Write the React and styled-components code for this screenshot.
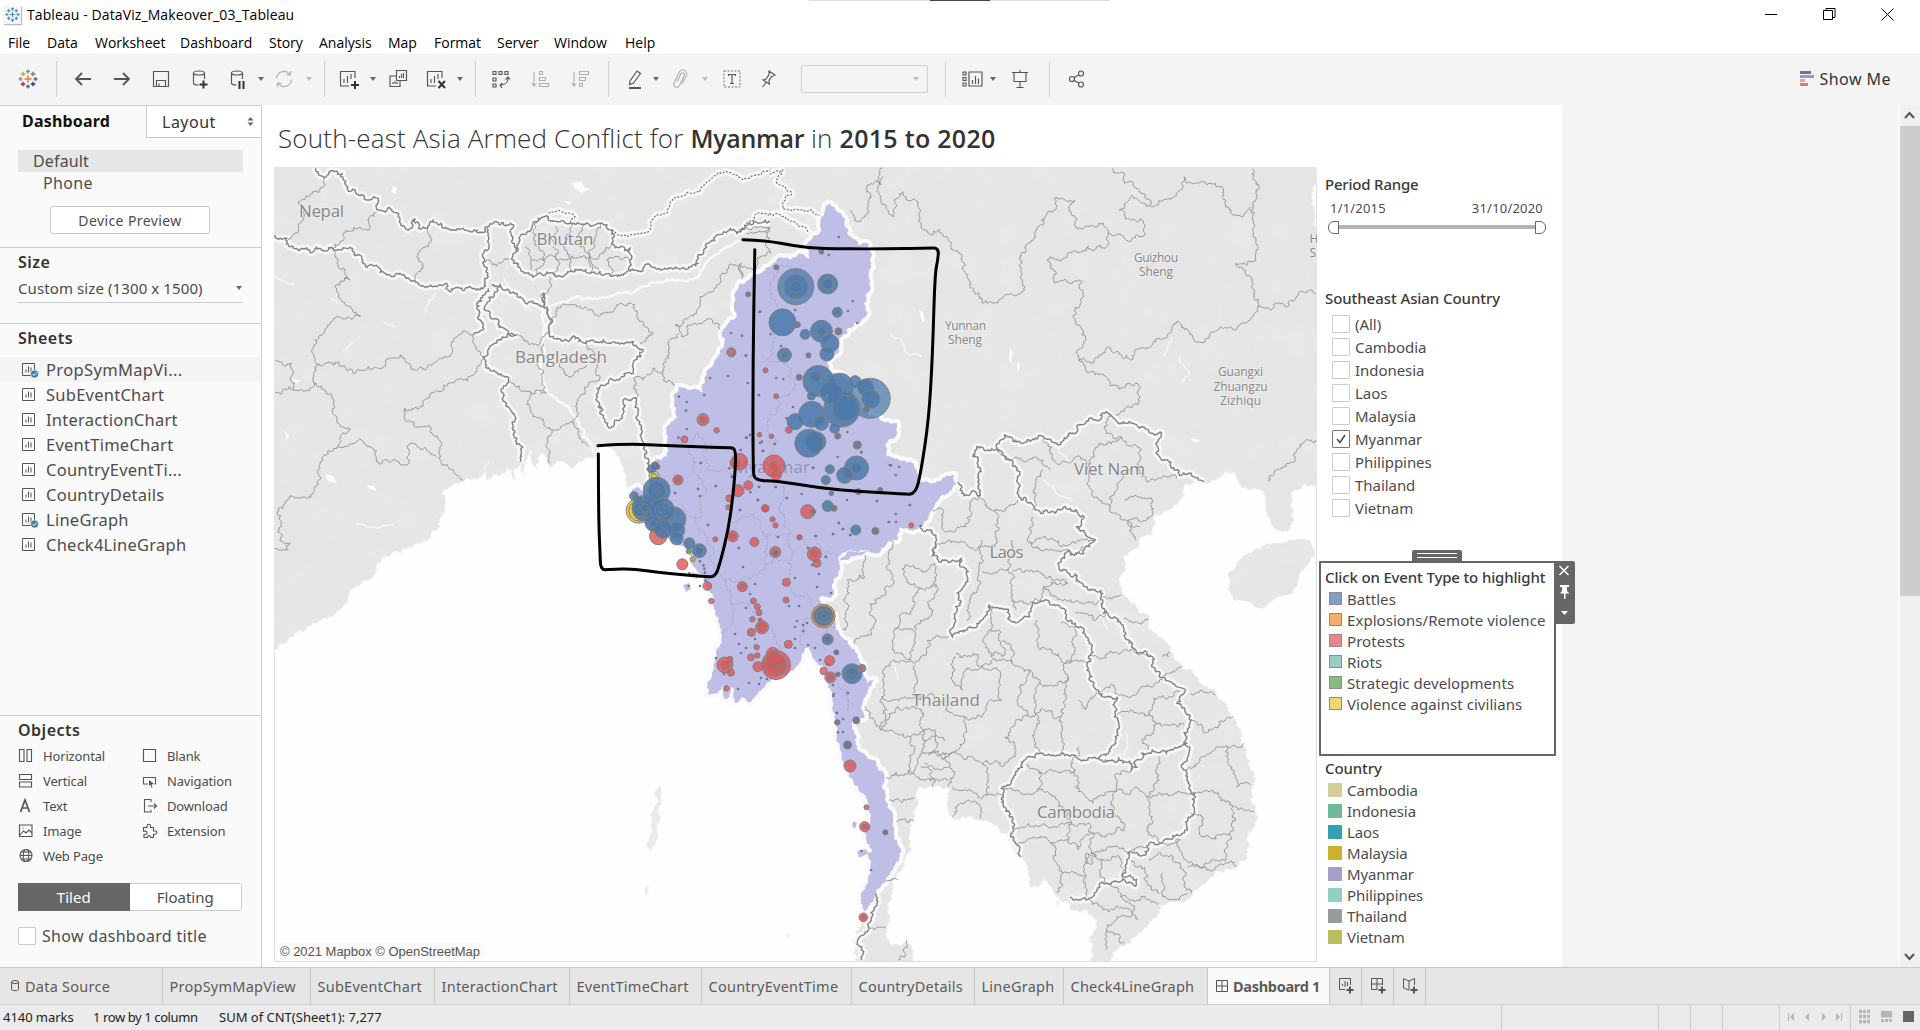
import React from "react";
import styled, { createGlobalStyle } from "styled-components";

const Global = createGlobalStyle`
  * { box-sizing: border-box; }
  body { margin: 0; background: #fff; overflow: hidden; }
`;

const ui = `"Open Sans", "Noto Sans", sans-serif`;
const book = `"Noto Sans", "Open Sans", sans-serif`;

/* ---------- shell ---------- */
const Window = styled.div`
  width: 1920px; height: 1030px; display: flex; flex-direction: column;
  background: #fff; color: #4c4c4c; font-family: ${book}; overflow: hidden; white-space: nowrap;
`;
const Txt = styled.span`
  font-size: ${p => p.$size || 15}px; font-weight: ${p => p.$w || 400};
  letter-spacing: ${p => p.$ls || 0}px; color: ${p => p.$c || "inherit"};
`;
const TitleBar = styled.header`
  height: 29px; display: flex; align-items: center; padding-left: 3px; gap: 6px; color: #000;
  font-family: ${ui}; position: relative;
`;
const TopNotch = styled.div`
  position: absolute; left: 809px; top: 0; width: 301px; height: 1px; background: #ddd;
  display: flex; justify-content: center;
  &::after { content: ""; width: 60px; height: 1px; background: #444; }
`;
const AppBadge = styled.span`
  width: 18px; height: 18px; display: grid; place-items: center; background: #f3f6f9;
  box-shadow: 1px 1px 1px #b9b9b9;
`;
const WinButtons = styled.div`
  margin-left: auto; display: flex; gap: 45px; padding-right: 26px; padding-bottom: 1px;
  svg { width: 13px; height: 14px; display: block; }
`;
const MenuBar = styled.nav`
  height: 25px; display: flex; align-items: center; padding: 2px 0 0 8px; color: #000; font-family: ${ui};
`;
const MenuItem = styled.span`
  width: ${p => p.$w}px; font-size: 14px; letter-spacing: 0;
`;
const ToolBar = styled.div`
  height: 51px; flex: none; display: flex; align-items: center; background: #f4f4f4; border-top: 1px solid #eee; padding-bottom: 2px;
`;
const Tool = styled.span`
  width: 20px; height: 20px; flex: none; margin-left: ${p => p.$ml}px; opacity: ${p => (p.$off ? 0.42 : 1)};
  svg { display: block; width: 20px; height: 20px; fill: none; stroke: #555; stroke-width: 1.15; overflow: visible; }
`;
const Sep = styled.span`width: 1px; height: 36px; background: #d0d0d0; margin-left: ${p => p.$ml}px;`;
const Caret = styled.span`
  width: 0; height: 0; flex: none; margin-left: ${p => (p.$ml || 0) + 1}px; margin-right: 1px;
  border: 3px solid transparent; border-top: 4px solid ${p => (p.$off ? "#bbb" : "#666")}; border-bottom: 0;
`;
const FitBox = styled.div`
  width: 127px; height: 28px; margin-left: 22px; border: 1px solid #d0d0d0; border-radius: 2px;
  display: flex; align-items: center; justify-content: flex-end; padding-right: 7px;
`;
const ShowMe = styled.div`
  margin-left: auto; margin-right: 29px; display: flex; gap: 6px; align-items: center; color: #333;
`;
const Body = styled.main`display: flex; height: 862px; flex: none;`;

/* ---------- side pane ---------- */
const Side = styled.aside`
  width: 262px; flex: none; background: #fafafa; border-right: 1px solid #ccc; border-top: 1px solid #ccc;
  display: flex; flex-direction: column;
`;
const PaneTabs = styled.div`height: 32px; display: flex;`;
const PaneTab = styled.div`
  width: ${p => (p.$on ? 146 : 115)}px; display: flex; align-items: center; padding-left: ${p => (p.$on ? 22 : 15)}px;
  color: #111; padding-bottom: ${p => (p.$on ? 3 : 0)}px;
  ${p => !p.$on && "border-left: 1px solid #ccc; border-bottom: 1px solid #ccc; background: #fff; padding-right: 7px; justify-content: space-between; color: #333;"}
`;
const DeviceBox = styled.div`height: 110px; padding: 12px 18px 0; border-bottom: 1px solid #ccc;`;
const Device = styled.div`
  height: 22px; display: flex; align-items: center; padding-left: ${p => (p.$on ? 15 : 25)}px;
  background: ${p => (p.$on ? "#e6e6e6" : "transparent")};
`;
const PreviewButton = styled.div`
  width: 160px; height: 28px; margin: 12px 0 0 32px; border: 1px solid #ccc; border-radius: 2px; background: #fff;
  display: flex; align-items: center; justify-content: center;
`;
const SizeBox = styled.div`height: 76px; border-bottom: 1px solid #ccc; padding: 1px 18px 0;`;
const SizeSelect = styled.div`
  height: 30px; display: flex; align-items: center; justify-content: space-between; border-bottom: 1px solid #ccc; padding-top: 1px;
`;
const Heading = styled.div`
  height: 24px; display: flex; align-items: center; font-size: 16px; font-weight: 600; letter-spacing: 0.5px; color: #333; padding-top: 2px;
  ${p => p.$pad && "padding-left: 18px;"}
`;
const SheetsBox = styled.div`height: 392px; padding-top: 1px; border-bottom: 1px solid #ccc;`;
const SheetList = styled.div`margin-top: 8px;`;
const Sheet = styled.div`
  height: 25px; display: flex; align-items: center; padding-left: 22px; gap: 8px; background: ${p => (p.$on ? "#f4f4f4" : "transparent")};
  svg { width: 16px; height: 17px; overflow: visible; }
`;
const ObjectsBox = styled.div`padding: 1px 18px 0;`;
const ObjectGrid = styled.div`
  display: grid; grid-template-columns: 124px 110px; grid-auto-rows: 25px; grid-auto-flow: row; margin-top: 2px;
`;
const ObjectItem = styled.div`
  display: flex; align-items: center; gap: 9px;
  svg { width: 16px; height: 16px; fill: none; stroke: #555; stroke-width: 1.1; overflow: visible; }
`;
const Segment = styled.div`display: flex; width: 224px; height: 28px; margin-top: 15px; border: 1px solid #ccc; border-radius: 2px;`;
const SegmentItem = styled.div`
  flex: 1; display: flex; align-items: center; justify-content: center;
  ${p => (p.$on ? "background: #666; color: #fff; margin: -1px 0 -1px -1px;" : "background: #fff;")}
`;
const CheckRow = styled.label`display: flex; align-items: center; gap: ${p => p.$gap}px; height: ${p => p.$h}px;`;
const Box = styled.span`
  width: 18px; height: 18px; border: 1px solid ${p => (p.$on ? "#777" : "#ccc")}; background: #fff; border-radius: 1px; display: grid; place-items: center;
  svg { width: 12px; height: 12px; fill: none; stroke: #444; stroke-width: 1.4; }
`;

/* ---------- canvas ---------- */
const Canvas = styled.section`width: 1300px; background: #fff; display: flex; flex-direction: column; flex: none;`;
const DashTitle = styled.h1`
  height: 62px; margin: 0; padding: 5px 0 0 16px; white-space: pre; color: #333;
  font: 300 26px/56px ${ui}; letter-spacing: 0.18px;
`;
const Strong = styled.b`font-size: 25px; font-weight: 600; letter-spacing: ${p => p.$ls}px;`;
const DashRow = styled.div`display: flex; padding-left: 12px;`;
const MapFrame = styled.div`
  width: 1043px; height: 795px; border: 1px solid #ddd; flex: none; background: #fefefe;
  svg { display: block; margin: -1px; width: 1043px; height: 794px; }
`;
const Filters = styled.div`width: 239px; padding-left: 2px; display: flex; flex-direction: column;`;
const Label = styled.div`
  height: 22px; display: flex; align-items: center; font-size: 15px; font-weight: 500; letter-spacing: ${p => p.$ls || -0.05}px; color: #3a3a3a;
`;
const Period = styled.div`height: 114px; padding: 6px 0 0 6px;`;
const Dates = styled.div`display: flex; justify-content: space-between; width: 213px; margin: 3px 0 0 5px; height: 19px; align-items: center;`;
const Slider = styled.div`
  display: flex; align-items: center; width: 218px; height: 12px; margin: 4px 0 0 3px;
  &::before, &::after { content: ""; width: 9px; height: 11px; border: 1px solid #666; background: #fff; border-radius: 6px 0 0 6px; }
  &::after { border-radius: 0 6px 6px 0; }
`;
const Track = styled.div`flex: 1; height: 4px; background: #b4b4b4;`;
const CountryFilter = styled.div`height: 269px; padding: 6px 0 0 6px;`;
const Options = styled.div`padding: 3px 0 0 7px;`;
const Grip = styled.div`
  width: 50px; height: 11px; margin-left: 93px; background: #666; border-radius: 2px 2px 0 0; display: flex; flex-direction: column; gap: 3px; padding: 3px 5px;
  &::before, &::after { content: ""; height: 1px; background: #fff; }
`;
const Legend = styled.div`
  position: relative; width: 237px; height: 195px; border: 2px solid #666; border-radius: 1px; padding: 3px 0 0 4px; flex: none;
`;
const LegendTools = styled.div`
  position: absolute; left: 233px; top: -2px; width: 21px; height: 63px; background: #666; border-radius: 0 2px 2px 0;
  svg { width: 22px; height: 63px; display: block; }
`;
const LegendRow = styled.div`height: 21px; display: flex; align-items: center; gap: 5px; padding-left: ${p => p.$pl}px;`;
const Swatch = styled.span`
  width: ${p => (p.$edge ? 13 : 14)}px; height: ${p => (p.$edge ? 13 : 14)}px; background: ${p => p.$c};
  ${p => p.$edge && "border: 1px solid #8c8c8c;"}
`;
const Countries = styled.div`padding: 1px 0 0 6px;`;
const Gutter = styled.div`flex: 1; background: #f4f4f4;`;
const ScrollBar = styled.div`
  width: 21px; background: #f0f0f0; display: flex; flex-direction: column; border-left: 1px solid #fff;
  svg { width: 19px; height: 21px; fill: none; stroke: #555; stroke-width: 2; }
`;
const Thumb = styled.div`height: 470px; background: #cdcdcd; margin-bottom: auto;`;

/* ---------- bottom ---------- */
const SheetTabs = styled.div`height: 38px; flex: none; background: #e6e6e6; border-top: 1px solid #c8c8c8; border-bottom: 1px solid #ccc; display: flex; color: #5a5a5a;`;
const Tab = styled.div`
  width: ${p => p.$w}px; border-right: 1px solid #c8c8c8; display: flex; align-items: center; gap: 5px;
  padding-left: ${p => p.$pl || 6.5}px; background: ${p => (p.$on ? "#fafafa" : "transparent")};
  svg { fill: none; stroke: #555; stroke-width: 1; overflow: visible; }
`;
const Status = styled.footer`height: 25px; background: #ebebeb; display: flex; align-items: center; color: #222; padding-left: 3px;`;
const StatusText = styled.span`width: ${p => p.$w}px; font-size: 13px; letter-spacing: ${p => p.$ls || 0}px; padding-bottom: 1px;`;
const StatusCell = styled.span`
  width: ${p => p.$w}px; height: 25px; border-left: 1px solid #ccc; display: flex; align-items: center;
  svg { width: 68px; height: 20px; margin-bottom: 1px; }
`;

/* ---------- map geometry ---------- */
const frames = {
  A: [270, 160, 1 / 3, 1 / 3],
  B: [740, 160, 1 / 2.7034, 1 / 3],
  C: [560, 420, 1 / 3, 1 / 3],
  D: [770, 540, 1 / 2.851, 1 / 3],
  P: [0, 0, 1, 1],
};
const pts = (f, s) => {
  const [ox, oy, sx, sy] = frames[f];
  const n = s.trim().split(/\s+/).map(Number);
  const out = [];
  for (let i = 0; i < n.length; i += 2) out.push([ox + n[i] * sx, oy + n[i + 1] * sy]);
  return out;
};
const noise = (a, b, c, d) => {
  const v = Math.sin(a * 12.9898 + b * 78.233 + c * 37.719 + d * 9.131) * 43758.5453;
  return (v - Math.floor(v)) * 2 - 1;
};
const wiggle = (p, q, amp, out) => {
  const dx = q[0] - p[0], dy = q[1] - p[1], len = Math.hypot(dx, dy);
  if (len < 2.6) { out.push(q); return; }
  const k = noise(p[0], p[1], q[0], q[1]) * amp * (len < 10 ? 1.8 : 0.9);
  const m = [(p[0] + q[0]) / 2 - dy * k, (p[1] + q[1]) / 2 + dx * k];
  wiggle(p, m, amp, out); wiggle(m, q, amp, out);
};
const rough = (ps, amp = 0.22, close = false) => {
  const src = close ? [...ps, ps[0]] : ps;
  const out = [src[0]];
  for (let i = 1; i < src.length; i++) wiggle(src[i - 1], src[i], amp, out);
  return "M" + out.map(p => p[0].toFixed(1) + " " + p[1].toFixed(1)).join("L") + (close ? "Z" : "");
};
const smooth = ps => {
  let d = `M${ps[0][0]} ${ps[0][1]}`;
  for (let i = 1; i < ps.length - 1; i++) {
    d += `Q${ps[i][0]} ${ps[i][1]} ${(ps[i][0] + ps[i + 1][0]) / 2} ${(ps[i][1] + ps[i + 1][1]) / 2}`;
  }
  return d + `L${ps.at(-1)[0]} ${ps.at(-1)[1]}`;
};
const lines = (f, list, amp) => list.split(";").map(s => s.trim()).filter(Boolean).map(s => rough(pts(f, s), amp)).join("");

const westCoast = [
  ...pts("D", "268 1120 258 1060 272 1045 287 1000 278 940 292 935 270 880 285 820 265 760 225 700 205 640 190 560 180 470 165 430 162 385 135 370 110 320 95 325"),
  ...pts("C", "735 682 715 735 690 755 620 790 570 850 545 830 525 848 515 800 500 838 490 795 470 820 440 825 450 780 470 710 485 660 475 600 460 530 440 510 430 470 400 440 385 390 350 370 300 350 240 300 215 250 215 210"),
];
const landPts = [
  ...pts("P", "270 160 1320 160 1320 487"),
  ...pts("B", "1540 978 1500 990 1490 1030 1500 1080 1480 1115 1450 1110 1425 1070 1420 1020 1415 990 1370 985 1340 945 1310 935 1290 955 1255 965 1200 980 1200 1010 1160 1050 1120 1070 1115 1110 1080 1150 1050 1180 1040 1200"),
  ...pts("D", "1011 80 995 120 1010 165 1050 210 1080 240 1080 270 1140 335 1190 390 1270 450 1320 530 1345 600 1370 690 1370 780 1385 810 1375 870 1360 940 1330 980 1250 1020 1190 1080 1110 1090 1110 1120 1050 1180 1010 1220 975 1240 965 1290 910 1290 910 1190 935 1140 900 1110 820 1070 780 1010 765 1040 740 1040 735 990 700 930 690 890 655 870 600 840 520 835 510 770 510 745 455 738 420 750 412 830 400 900 385 960 350 1040 335 1100 332 1180 350 1215 395 1210 410 1290 235 1290 245 1190 260 1150"),
  ...westCoast,
  ...pts("A", "1120 980 1090 1000 1065 960 1045 890 1000 850 975 890 900 920 870 905 840 930 820 880 800 930 780 870 765 945 750 905 730 960 715 910 700 940 650 960 655 900 640 945 560 970 515 1000 525 1050 500 1110 440 1150 340 1190"),
  ...pts("P", "372 578 340 610 306 630 288 640 270 656"),
];
const myanmarPts = [
  ...pts("B", "240 130 265 155 285 180 300 230 320 255 345 250 350 330 352 390 335 430 345 460 310 490 275 530 268 570 240 600 245 640 300 660 350 765 400 785 425 790 420 830 400 840 395 890 470 910 482 965 520 970 580 945 585 970 540 1010 520 1050 490 1100 430 1105 425 1140 370 1180 290 1175 270 1200"),
  ...pts("C", "930 393 860 392 835 410 830 470 820 490 815 530 780 530 790 560 825 590 830 630 890 700 910 740 920 790 945 780 925 810 910 840 910 895"),
  ...pts("D", "235 545 240 600 290 660 325 700 330 770 350 850 375 935 350 990 330 1025 300 1060 285 1090"),
  ...westCoast,
  ...pts("A", "1105 980 1128 1000 1140 940 1150 905 1195 890 1190 800 1220 770 1225 680 1300 695 1310 640 1350 580 1365 540 1355 520 1400 470 1410 370 1500 320"),
  ...pts("B", "100 298 160 280 195 305 180 260 215 220 220 170"),
];
const land = rough(landPts, 0.18, true);
const myanmar = rough(myanmarPts, 0.14, true);
const hainan = rough(pts("D", "1310 95 1380 30 1450 8 1540 0 1552 50 1510 100 1490 160 1400 205 1320 180 1305 150"), 0.12, true);

const nations =
  lines("A", `137 25 160 50 190 33 218 40 228 75 265 105 300 120 325 115 325 150 380 158 390 180 420 205 435 178 450 208 472 205 480 185 540 210 600 215 645 208 700 188 722 190 727 240 740 275;
  15 225 50 235 65 258 120 278 140 260 190 268 240 262 280 310 330 325 360 345 390 340 430 362 490 380 530 370 540 395 600 380 640 385 655 350 638 290 650 205;
  740 275 750 240 780 215 800 185 835 170 900 190 990 190 1025 210 1025 250 1080 265 1078 330 1020 345 960 340 900 335 860 350 800 345 760 335 725 295 740 275;
  1080 335 1140 315 1200 325 1265 320 1310 250 1400 220 1500 185;
  655 385 620 430 640 495 612 520; 690 370 650 430 660 470 740 525 685 540 640 590 650 625 715 660 700 700 735 780 750 905;
  665 375 700 390 740 400 790 430 820 440 820 400 835 450 835 520 900 540 1000 540 1090 545 1120 570 1095 600 1090 635 1040 660 990 680 985 740 1005 785 1030 800 1060 760 1065 715 1100 720 1115 800 1130 880 1137 940`) +
  lines("B", `590 965 600 1000 650 1005 645 940 630 890 640 860 695 865 715 825 765 850 820 830 860 855 900 820 960 780 990 755 1020 785 1080 805 1140 820 1125 880 1180 930 1255 965;
  695 865 730 900 750 950 760 1020 800 1050 880 1040 930 1070 910 1100 960 1140 930 1180; 485 1100 520 1120 530 1160 518 1190`) +
  lines("D", `895 40 840 40 825 90 900 140 945 170 945 200 1000 250 1090 350 1110 410 1180 460 1160 490 1200 540 1190 620 1180 690 1200 760 1190 870 1110 910 1080 915;
  465 30 480 60 545 55 545 150 530 200 520 290 570 260 625 195 690 245 740 230 760 190 830 205 870 250 910 310 905 380 935 450 990 470 985 600 940 650;
  940 650 860 645 780 645 730 655 700 700 660 745 665 800 695 850 700 910 715 950; 940 650 1030 690 1060 640 1090 630 1130 640 1190 610;
  1080 915 1070 945 1020 940 1005 1000 1045 1035 990 1025 940 1030 920 1070 880 1080 855 1070; 300 1050 305 1090 280 1170 250 1200 260 1260`);

const regions =
  lines("A", `160 50 165 75 115 110 85 125 90 190 55 240; 320 155 290 210 210 250 190 268; 478 190 475 260 440 290 458 310 435 360;
  190 268 205 320 240 360 195 380 215 420 272 468 215 475 135 540 150 615 130 665 100 695 70 690 65 610 15 600; 15 700 70 690;
  150 615 205 605 255 640 340 620 390 585 465 630 535 590 545 545 590 515 612 520;
  612 520 632 580 600 650 520 690 460 730 405 745 405 775 470 800 510 885 550 930 580 960;
  130 665 190 720 205 790 240 805 205 860 310 865 320 905 370 900 410 915 420 850 500 890;
  205 860 160 900 135 980 110 1015 55 1015 25 1045 30 1140 60 1150 55 1170 15 1165; 840 350 835 390 815 420; 640 305 720 298;
  840 490 860 445 920 440 980 465 1050 430 1095 435 1100 470 1150 520 1110 550;
  1415 310 1415 355; 1415 315 1350 350 1290 410 1280 450 1215 495 1235 530 1270 490 1345 490 1350 510; 1225 520 1185 600 1180 660 1215 675;
  1180 635 1155 625 1120 660 1098 650 1100 720; 820 550 820 640 830 700 780 695 720 660; 780 695 845 820 840 910; 845 810 910 790 955 860;
  910 790 930 710 990 650 985 600 955 570 950 540; 740 525 810 550 830 450; 870 610 885 645 910 645 950 615;
  765 260 785 330; 800 185 790 240 820 290 800 345; 860 200 850 260 860 350; 905 190 880 260 900 335; 940 195 930 260 960 340; 990 190 960 270 985 330; 785 300 830 290 880 300 930 290 1000 280 1025 250; 1020 345 1010 300 1078 300; 1430 220 1480 215 1500 200`) +
  lines("B", `385 25 380 75 345 75 345 160 320 185 300 150; 385 50 395 140 415 170 420 130 440 95 465 120 490 190 515 225 540 210 570 260 610 340 620 380 655 430 700 420 760 400 770 380 760 280 800 230 815 180 850 150 850 115 905 120 890 150 910 205 970 190 995 220 985 265 900 275 830 300 850 370 925 365 920 420 900 470 935 540 915 600 990 565 1060 600 1080 565 1140 540 1175 490 1240 545 1300 500 1360 490 1400 440 1385 360 1340 310 1395 300 1395 240 1380 150 1385 25;
  995 220 1085 230 1090 185 1025 150 1060 105 1130 135 1190 90 1200 50 1285 70 1310 130 1360 170 1380 140; 1005 25 1040 45 1040 70 1085 100 1110 135;
  1400 440 1450 430 1480 440 1510 405 1557 400; 915 600 935 635 1000 665 1075 670 1075 735 1015 765; 1557 840 1520 850 1500 900 1450 930 1430 965;
  700 870 760 900 820 900 840 930; 820 830 850 900 920 890 940 930 970 850 1030 830 1085 870 1080 930 1100 965 1180 955; 1000 760 990 820 1030 830;
  940 930 950 1000 1000 1040 1080 1100; 1000 1040 1030 960 1060 930; 820 930 800 1000 790 1050; 750 1020 690 1050 690 1160 640 1170 520 1170;
  650 1005 610 1100 550 1110 550 1050 520 1050; 790 1070 780 1130 850 1170 930 1160; 690 1050 650 1005; 1040 1020 1115 1020 1110 1070 1050 1080 1070 1140; 0 215 40 200 80 205 70 260 85 280 0 320 10 350`) +
  lines("D", `270 45 270 110 220 120 215 170 225 200 220 260 205 270; 345 0 340 60 350 120 330 160 285 190 290 280 240 310; 385 75 390 120 430 145 410 200 370 235 355 270 350 330 400 360 415 280 355 265;
  430 145 475 140 455 230 415 270; 475 140 470 70 385 75; 605 0 600 130 570 190 560 240; 605 95 680 85 690 150 700 210; 680 85 690 0; 690 95 800 110 850 130 780 140 770 180 690 180;
  740 10 850 15 930 0; 780 140 830 180 900 190 940 180; 870 215 930 240 960 210; 915 345 1000 340 1090 350; 935 455 1030 470 1060 440 1120 420; 990 525 1080 520 1110 470 1170 450; 1080 520 1100 550 1180 550; 1100 550 1060 600 1080 630;
  625 200 625 270 650 270 670 340 630 350 625 270; 510 290 450 300 430 350 410 370 345 365 320 400 320 470 415 470 415 375; 320 470 315 570 400 590 395 700 330 715; 530 340 580 340 600 380 690 370 660 300;
  530 350 520 420 550 450 560 385 650 390 660 480 590 530 555 530 555 600 500 640; 690 370 740 390 770 430 850 410 840 370 905 365; 740 390 710 440 735 525 830 530 840 450 850 410; 770 430 765 530 770 640; 830 530 830 640;
  735 525 670 590 700 650 610 675 530 640 440 640; 415 470 470 470 500 510 555 530; 400 590 470 570 460 640 500 640 510 740; 760 240 770 330 840 370; 830 250 870 260 870 330 840 370; 880 480 900 510 930 455;
  610 675 620 765 570 750 520 740; 620 765 660 765; 520 830 530 800 590 790 600 835; 340 780 410 770; 360 845 410 840; 660 745 690 750 780 755 860 850 850 900 800 910 705 910; 765 690 765 755; 730 675 765 690 870 690 870 650;
  695 865 780 850 860 850; 435 520 440 640 395 700 440 720 510 720; 440 600 500 600; 440 670 510 680; 465 740 460 690 430 680; 315 570 340 520 440 520;
  870 690 870 740 920 790 985 755 1080 770 1200 765; 985 755 990 700 1030 695; 985 755 1010 870 920 880 915 940 1000 925 1075 915; 1075 770 1090 830 1075 870 1110 910; 850 850 910 850 920 880 880 930 850 900;
  800 910 810 960 835 1000 900 1005 910 940; 835 1000 820 1060; 900 1005 900 1070; 915 940 950 960 950 1030; 1110 650 1110 720 1080 770; 1200 540 1240 580 1280 545 1320 530; 1190 690 1240 650 1305 620 1350 610;
  1305 620 1330 740 1370 735; 1200 760 1280 770 1320 800 1380 815; 1200 820 1230 830 1230 890 1310 880 1320 800; 1170 900 1180 950 1300 960 1310 880; 1080 960 1170 970 1200 1060; 1120 910 1170 900; 1190 980 1245 990 1330 980;
  1120 1000 1120 1070 1190 1060; 950 1030 1000 1070 1110 1090; 910 1080 950 1110 1050 1140; 990 1130 960 1170 960 1230; 960 1170 1010 1210; 270 500 315 560; 285 1165 330 1160; 330 1025 365 1020; 390 1200 385 1250 365 1260;
  880 620 880 650; 900 940 930 945 920 970 900 970 900 940; 950 960 1000 960 1010 1020; 1030 960 1070 1000 1110 1060; 1000 1070 1040 1110 990 1130; 1200 460 1270 465; 1120 350 1140 335; 1000 165 950 170; 1080 240 1010 235; 1120 410 1175 380`);

const dotted =
  lines("A", `1025 210 1070 230 1140 210 1145 180 1190 160 1210 115 1290 95 1320 60 1360 38 1420 60 1470 45 1500 30; 835 158 870 152 915 170 900 190; 1400 220 1430 190 1480 160 1500 165`, 0.14) +
  lines("B", `80 42 115 30 100 70 140 100 115 145 160 150 215 165; 80 160 120 170 150 190 185 220`, 0.14);
const inner =
  lines("C", `415 40 440 150 500 150 520 170; 415 40 425 280 400 290 440 350 460 430 490 480 580 465 615 450 610 340 580 280 520 310; 490 480 510 550 490 665; 510 550 545 545 580 580 630 620 665 700; 610 335 690 340 690 430 615 430; 690 430 700 520 755 540 770 570; 670 200 660 260 690 340; 630 50 670 200; 690 340 750 400 770 370 830 410; 730 680 730 600 800 600; 800 690 790 640 830 620; 830 800 860 810 860 870; 370 250 400 290`) +
  lines("B", `185 315 105 320 90 400 100 440; 85 480 75 600 130 620 150 680 105 720 80 780 100 850`);
const water =
  lines("A", `840 440 930 410 1080 400 1140 370 1290 345 1370 260 1410 245; 820 440 820 530 830 700 900 750 940 830 980 880`, 0.12);
const streams =
  lines("A", `465 460 475 420 500 400; 15 350 75 375; 220 570 250 545; 260 1090 320 1105 370 1095; 340 485 375 500; 700 350 720 380; 180 415 205 430; 750 430 785 455`, 0.12) +
  lines("B", `405 520 440 550 450 580 490 590; 1190 590 1215 640 1190 665; 1145 590 1165 530; 820 960 900 1020; 850 860 895 910`, 0.12) +
  lines("D", `945 230 965 270; 1020 580 1000 660; 350 370 365 420; 250 570 265 610`, 0.12);
const ponds = "M393 185l4 3-1 6-5-2zM572 183l9-2 4 7 6 0-9 5-7-4zM563 201l9 1-3 3zM325 474l8 2 4 7-8-1zM367 485l7 1 3 5-8-2zM919 310l4 2 2 9-3 1zM1010 348l3 5-2 9-2-2zM1017 362l3 2-1 7-2-1zM1190 438l10 2-5 3zM284 430l5 6-2 4zM292 379l9 1-5 4z";

const BLUE = "#4a79aa", RED = "#e05558", ORANGE = "#f5993d", YELLOW = "#edc948", GREEN = "#59a14f", GREY = "#6f7488", BROWN = "#a9717a";
const marks = [
  ["B", BLUE, 0.72, "352 715 20 151 380 18 151 380 12 151 380 6"],
  ["B", ORANGE, 0.8, "292 935 5"],
  ["B", BLUE, 0.86, "237 372 10 237 372 5 115 487 13.5 220 514 11 243 550 9 235 582 7 176 523 5 120 585 7 263 457 5 212 663 15.5 270 680 13.5 311 665 6 340 682 8 354 717 9 275 747 18 285 745 13 246 698 11 204 650 5 194 763 13 149 785 8 220 790 7 256 805 5 205 845 10 186 850 14 315 924 12 315 924 5 283 946 8 243 928 4.5 232 960 4.5 237 1038 5.5 313 1110 5 220 514 4 120 585 3 263 457 2 193 708 4"],
  ["B", GREY, 0.9, "155 494 3 266 514 3.5 185 586 2.5 160 652 3 342 748 3 264 828 3 317 855 4 220 275 2.5 98 322 2.5 22 403 2.5 254 1045 3 366 1113 3.5 247 1000 2.3 320 995 3 379 990 2.5"],
  ["B", RED, 0.85, "69 631 2.5 98 709 2.5 132 810 3.3 53 824 2.3 85 829 2.3 68 1045 3.5 88 1078 2.6 96 1096 2.6 463 1096 2.5 161 1132 2.6"],
  ["A", RED, 0.75, "1299 779 6 1299 779 3 1340 811 2.7 1243 838 3.5"],
  ["A", BROWN, 0.9, "1384 577 4.5"],
  ["C", RED, 0.8, "642 138 11 649 165 5 642 138 4 538 125 8.3 525 130 5 354 180 5 354 180 2.5 534 212 6 565 196 4.5 508 235 3.5 505 262 2.5 616 265 3.7 743 275 7 518 349 5.5 518 349 3 583 366 4.5 646 396 5.5 763 402 7 763 402 4 771 430 4 466 358 2.5 718 352 2.5 367 433 5.5 295 348 8.7 442 498 4.3 454 543 2.7 547 500 5 547 500 2.5 679 487 4 678 540 3 580 543 3 592 560 3 597 578 3 601 600 2 577 598 2.7 574 637 4 606 622 6.5 606 622 4 590 682 2.7 573 712 3.5 592 706 2.7 685 673 4 638 700 6 594 740 5 648 735 14.5 645 735 11 650 735 8 650 735 4 650 735 2 495 735 8 495 735 4 513 758 3.5 510 718 3 499 805 2.7 809 722 5 791 753 3.7 811 772 5.5"],
  ["C", YELLOW, 0.95, "236 272 12.5 238 272 10.5 282 168 5 282 168 2.5"],
  ["C", ORANGE, 1, "790 588 11.8 398 418 2.5"],
  ["C", GREEN, 0.9, "386 394 2.5"],
  ["C", BLUE, 0.85, "275 146 4 285 138 4 292 140 2.5 222 228 4.3 233 240 4 340 298 12.5 350 330 8 350 355 6.5 388 370 5.5 418 392 7 418 392 4 290 212 13.5 290 212 9 290 212 4 290 212 1.5 255 265 13 255 265 9 241 268 7 244 268 3.5 255 265 4 307 270 12 307 270 7 307 270 3.5 280 310 8 280 310 4 310 328 9 790 588 10 790 588 6 790 588 3 803 658 5.5 803 658 3 876 761 10 876 761 6 876 761 3 834 763 2.3 760 275 2.3"],
  ["C", BROWN, 0.95, "906 745 3.8 811 772 3"],
  ["C", GREY, 0.95, "829 697 2.5 646 398 2.7"],
  ["D", RED, 0.8, "228 678 6 275 802 2.5 270 860 5 270 860 2.3 266 1132 4.3 266 1132 2"],
  ["D", GREY, 0.95, "221 615 4 246 541 3.5 192 547 2.7 329 877 2.5"],
];
const specks = [
  ...pts("A", "1470 455 1383 519 1416 527 1428 587 1374 648 1320 654 1433 669 1303 705 1227 710 1250 726 1248 752 1467 705 1250 807 1225 833 1428 833 1440 825 1470 849 1412 870 1480 873 1293 909 1338 978 1284 987 1290 1008 1215 999 1386 951 1467 981 1464 1020 1410 1050 1314 1095 1407 1164"),
  ...pts("B", "267 231 240 285 305 423 292 453 317 489 149 450 53 456 83 522 16 587 111 558 98 654 117 657 51 705 143 741 126 775 290 816 94 852 61 873 264 891 328 876 197 924 405 915 430 921 421 945 48 1020 127 1014 97 981 289 1020 370 1023 459 1035 421 1062 402 1086 267 1089 278 1107 204 1128 299 1125 488 1098 232 1190 252 1122"),
  ...pts("C", "560 53 606 65 644 72 508 145 422 129 414 207 345 219 516 170 467 198 597 201 571 217 594 240 647 201 540 270 680 234 725 222 951 243 1008 306 1050 255 905 97 760 143 993 136 987 306 849 327 837 309 768 348 819 342 870 345 744 384 798 411 756 435 777 462 771 501 813 519 705 474 717 558 687 558 585 492 570 522 558 564 549 441 536 384 654 351 444 315 420 424 430 436 433 446 435 458 436 470 437 482 386 498 420 498 388 460 525 642 537 672 558 684 543 699 468 714 711 603 705 621 729 615 741 609 729 633 705 657 744 675 765 684 705 684 780 720 801 733 819 795 821 822 864 819 831 879 603 774 597 792 567 789 534 807 492 762 621 777 585 657 597 600"),
  ...pts("D", "190 519 208 537 208 576 194 577 261 933 288 990 180 468 222 459"),
];

const MapLabel = styled.text`
  font: ${p => p.$size}px "Open Sans", "Noto Sans", sans-serif; fill: ${p => p.$fill || "#858585"};
  ${p => !p.$fill && "paint-order: stroke; stroke: rgba(240,240,240,.75); stroke-width: 2px;"}
`;
const labels = [
  ["Nepal", 299, 217, 45, 17], ["Bhutan", 536.5, 245, 57, 17], ["Bangladesh", 515, 363, 92, 17], ["Viet Nam", 1074, 475, 71, 17],
  ["Laos", 989.5, 558, 34, 17], ["Thailand", 912, 706, 68, 17], ["Cambodia", 1037, 818, 78, 17],
  ["Guizhou", 1134, 261.5, 44, 12], ["Sheng", 1139, 276, 34, 12], ["Yunnan", 945, 329.5, 41, 12], ["Sheng", 948, 344, 34, 12],
  ["Guangxi", 1218, 376, 45, 12], ["Zhuangzu", 1213.5, 390.5, 54, 12], ["Zizhiqu", 1220, 404.5, 41, 12], ["H", 1309.5, 242.5, 8, 12], ["S", 1309.5, 256.5, 7, 12],
];

function ConflictMap() {
  return (
    <svg viewBox="274 167 1043 794">
      <defs>
        <clipPath id="landClip"><path d={land} /><path d={hainan} /></clipPath>
        <filter id="relief" x="0" y="0" width="100%" height="100%">
          <feTurbulence type="fractalNoise" baseFrequency="0.035 0.028" numOctaves="4" seed="8" />
          <feColorMatrix values="0 0 0 0 1  0 0 0 0 1  0 0 0 0 1  1.6 0 0 0 -0.62" />
        </filter>
      </defs>
      <path d={land} fill="#e5e5e5" stroke="#f1f1f1" strokeWidth="1" />
      <path d={hainan} fill="#e5e5e5" />
      <g clipPath="url(#landClip)"><rect x="274" y="167" width="1043" height="794" filter="url(#relief)" opacity=".2" /></g>
      <path d={rough(pts("P", "655 790 661 785 662 800 657 830 652 850 648 842 650 815"), 0.2, true)} fill="#eaeaea" />
      <path d="M646 885l3 2-2 9-3-2zM786 934l3 0-1 6zM1056 900l4 2-3 6z" fill="#ededed" />
      <path d={ponds} fill="#fbfbfb" />
      <path d={water} fill="none" stroke="#f8f8f8" strokeWidth="2.6" />
      <path d={streams} fill="none" stroke="#f8f8f8" strokeWidth="1.3" />
      <path d={nations + dotted} fill="none" stroke="#f6f6f6" strokeWidth="7" strokeLinejoin="round" />
      <path d={myanmar} fill="none" stroke="#fafafa" strokeWidth="8" strokeLinejoin="round" />
      <path d={regions} fill="none" stroke="#8e8e8e" strokeWidth=".9" />
      <path d={nations} fill="none" stroke="#828282" strokeWidth="1.4" />
      <path d={dotted} fill="none" stroke="#6a6a6a" strokeWidth="1.1" strokeDasharray="2 1.6" />
      <path d={myanmar} fill="#bfbee6" />
      <path d="M853 821l4 2-2 6-3-3zM857 851l8-2 4 4-10 5zM683 585l6-2 2 6-5 3zM691 572l8 2-2 5z" fill="#bfbee6" />
      <path d={inner} fill="none" stroke="#a5a3bd" strokeWidth=".8" strokeDasharray="3 1" />
      <MapLabel x="733" y="472.500" textLength="77" $size={17} $fill="#9693b6">Myanmar</MapLabel>
      {labels.map(([t, x, y, w, s], i) => <MapLabel key={i} x={x} y={y} textLength={w} $size={s}>{t}</MapLabel>)}
      {specks.map((p, i) => <circle key={i} cx={p[0]} cy={p[1]} r="1.3" fill="#74748f" />)}
      {marks.map(([f, c, o, s], g) => {
        const n = s.split(" ").map(Number), [ox, oy, sx, sy] = frames[f], out = [];
        for (let i = 0; i < n.length; i += 3)
          out.push(<circle key={i} cx={ox + n[i] * sx} cy={oy + n[i + 1] * sy} r={n[i + 2]} fill={c} fillOpacity={o} stroke="#7d8080" strokeWidth="1" />);
        return <g key={g}>{out}</g>;
      })}
      <g fill="none" stroke="#000" strokeWidth="3" strokeLinecap="round" strokeLinejoin="round">
        <path d={smooth(pts("B", "8 239 70 241 150 259 220 266 380 267 510 264 537 264 535 300 527 340 520 600 510 780 490 930 475 1003 440 1002 330 995 220 985 100 962 40 962 35 930 35 600 40 269"))} />
        <path d={smooth(pts("C", "114 77 200 71 330 77 500 83 526 83 527 130 520 220 505 330 480 430 466 470 440 470 300 458 220 446 150 448 122 450 120 400 116 300 115 102"))} />
      </g>
      <rect x="277" y="942" width="208" height="16" fill="#fafafa" />
      <text x="280" y="956" textLength="200" fontFamily="Liberation Sans, sans-serif" fontSize="13" fill="#555">© 2021 Mapbox © OpenStreetMap</text>
    </svg>
  );
}

/* ---------- glyphs ---------- */
const Plus = ({ x, y }) => <path d={`M${x - 4} ${y}h8M${x} ${y - 4}v8`} stroke="#333" strokeWidth="2" />;
const chart = "M16 9V2.5H1.5V17H10M5 10v4M8.500 7v7M12 5v5";
const glyphs = {
  back: <path d="M18 10H3M9 4l-6 6 6 6" strokeWidth="1.8" />,
  fwd: <path d="M2 10h15M11 4l6 6-6 6" strokeWidth="1.8" />,
  save: <path d="M2.500 2.500h15v15h-15zM5.500 17v-5.500h9V17M8 17v-2.500" />,
  dbAdd: <><path d="M4.500 4v10c0 1 2 2 5 2M15.500 4v6" /><ellipse cx="10" cy="4" rx="5.500" ry="2" /><Plus x={14.500} y={15.500} /></>,
  dbPause: <><path d="M4.500 4v10c0 1 2 2 5 2M15.500 4v6" /><ellipse cx="10" cy="4" rx="5.500" ry="2" /><path d="M12.500 12v8M16.500 12v8" stroke="#333" strokeWidth="2" /></>,
  refresh: <path d="M2.500 9.500a7.500 7.500 0 0 1 13.500-4M17.500 10.500a7.500 7.500 0 0 1-13.500 4M16.800 2l-.5 4-4-.5M3.200 18l.5-4 4 .5" />,
  chartAdd: <><path d={chart} /><Plus x={16} y={16} /></>,
  dup: <path d="M8.500 1.500h10v10h-10zM8 7H2v10.500h10V12M11.500 7v2M13.500 5v4M15.500 4v5M5 13v2M7 12v3M9 13v2" />,
  chartX: <><path d={chart} /><path d="M12.500 12l6.500 7M19 12l-6.500 7" stroke="#333" strokeWidth="2" /></>,
  swap: <path d="M2 2.500h3v3H2zM8 2.500h3v3H8zM14 2.500h3v3h-3zM2 9h3v3H2zM2 15h3v3H2zM17 8c.5 5-3 8-8 8.500M14.500 10.500L17 8l2 2.500M11.500 14L9 16.500l2 2.500" />,
  sortA: <path d="M4 3v14M1.500 14L4 17l2.500-3M9.500 2.500h3v3h-3zM9.500 8.500h6v3h-6zM9.500 14.500h9v3h-9z" />,
  sortB: <path d="M4 3v14M1.500 14L4 17l2.500-3M9.500 2.500h9v3h-9zM9.500 8.500h6v3h-6zM9.500 14.500h3v3h-3z" />,
  pen: <><path d="M5 12l7-10 3.500 2.500-7 9.500L4.500 15.500z" /><path d="M4 19h12" strokeWidth="2" /></>,
  clip: <path d="M6 13l4-8.500a2 2 0 0 1 3.500 1.500l-5 10.500a3 3 0 0 1-5.500-2.500l5-10.500a4 4 0 0 1 7.500 3L11 15" />,
  text: <><path d="M2 2h16v16H2z" strokeDasharray="2 1.500" strokeWidth="1" opacity=".8" /><path d="M6.500 7V5.500h7V7M10 5.500v9M8 14.500h4" /></>,
  pin: <path d="M10 2l6 4-1.500 1-2 .5-2.500 4 .5 3.500L4 11l3-1 3-4.500zM7.500 13l-4 5" />,
  dash: <path d="M1 3h3v3H1zM1 8.500h3v3H1zM1 14h3v3H1zM7 3h13v14H7zM10.500 15v-4M13.500 15V7M16.500 15V9.500" />,
  present: <path d="M2 3.500h16M4 3.500v9h12v-9M10 12.500V18M6.500 18.500h7M10 1v2" />,
  share: <><circle cx="5" cy="10" r="2.500" /><circle cx="14" cy="4.500" r="2.500" /><circle cx="14" cy="15.500" r="2.500" /><path d="M7 8.800l5-3M7 11.200l5 3" /></>,
};
const sparks = [[10, 10, 3.5, "#e8762d"], [10, 2.5, 2, "#7199a6"], [10, 17.5, 2, "#5b6591"], [2.5, 10, 2, "#7199a6"], [17.5, 10, 2, "#5b6591"], [5, 5, 2.3, "#eb912c"], [15, 5, 2.3, "#59879b"], [5, 15, 2.3, "#c72035"], [15, 15, 2.3, "#1f457e"]];
const Logo = ({ mono, size = 20 }) => (
  <svg viewBox="0 0 20 20" width={size} height={size} fill="none">
    {sparks.map(([x, y, r, c], i) => <path key={i} d={`M${x - r} ${y}h${2 * r}M${x} ${y - r}v${2 * r}`} style={{ stroke: mono ? "#4a86b0" : c }} strokeWidth="1.4" />)}
  </svg>
);
const T = ({ g, ml, off }) => <Tool $ml={ml} $off={off}><svg viewBox="0 0 20 20">{glyphs[g]}</svg></Tool>;

const menu = [["File", 39], ["Data", 48], ["Worksheet", 85], ["Dashboard", 89], ["Story", 50], ["Analysis", 69], ["Map", 46], ["Format", 63], ["Server", 57], ["Window", 71], ["Help", 40]];
const sheets = [["PropSymMapVi...", 1], ["SubEventChart"], ["InteractionChart"], ["EventTimeChart"], ["CountryEventTi..."], ["CountryDetails"], ["LineGraph", 1], ["Check4LineGraph"]];
const objects = [
  ["Horizontal", <path d="M1.500 1.500h4.500v12h-4.500zM9 1.500h4.500v12H9z" />], ["Blank", <path d="M1.500 1.500h12v12h-12z" />],
  ["Vertical", <path d="M1.500 1.500h12v5h-12zM1.500 9h12v5h-12z" />], ["Navigation", <><path d="M6 11H1.500V4.500h12V11h-1" /><path d="M7 7l5 4-2.500.5 1 3-1 .3-1-3-1.500 1z" fill="#555" stroke="none" /></>],
  ["Text", <path d="M2.500 14L7 2l4.500 12M4 10h6" strokeWidth="1.700" />], ["Download", <path d="M9 4V1.500H2.500v12.500H9V12M6 8h8.500M12 5.500L14.500 8 12 10.500" />],
  ["Image", <path d="M1.500 2h12.500v11.500H1.500zM2 12l3.500-4 2.500 2 3-3 3 3M4.500 5h1" />], ["Extension", <path d="M5 4.500V3a1.700 1.700 0 0 1 3.500 0V4.500H11.500V8h1.800a1.600 1.600 0 0 1 0 3.200H11.500V14.500H8.500c0-2.500-3-2.500-3 0H2V11.500h1.300a1.700 1.700 0 0 0 0-3.400H1.500V4.500z" />],
  ["Web Page", <><circle cx="8" cy="7.500" r="6" /><ellipse cx="8" cy="7.500" rx="2.800" ry="6" /><path d="M2 7.500h12M3 4h10M3 11h10" /></>],
];
const countries = ["(All)", "Cambodia", "Indonesia", "Laos", "Malaysia", "Myanmar", "Philippines", "Thailand", "Vietnam"];
const events = [["Battles", "#7f9fc6"], ["Explosions/Remote violence", "#f6ae69"], ["Protests", "#ea8689"], ["Riots", "#9ccbc7"], ["Strategic developments", "#88bb80"], ["Violence against civilians", "#f2d675"]];
const colours = [["Cambodia", "#d6cd9b"], ["Indonesia", "#6fb899"], ["Laos", "#31a1b3"], ["Malaysia", "#ccb22b"], ["Myanmar", "#a39fc9"], ["Philippines", "#94d0c0"], ["Thailand", "#959c9e"], ["Vietnam", "#bdbd5f"]];
const tabs = [["PropSymMapView", 148], ["SubEventChart", 124], ["InteractionChart", 135], ["EventTimeChart", 132], ["CountryEventTime", 150], ["CountryDetails", 123], ["LineGraph", 89], ["Check4LineGraph", 144]];

export default function App() {
  return (
    <Window>
      <Global />
      <TitleBar>
        <TopNotch />
        <AppBadge><Logo mono size={15} /></AppBadge>
        <Txt $size={14} $ls={0.1}>Tableau - DataViz_Makeover_03_Tableau</Txt>
        <WinButtons>
          <svg viewBox="0 0 13 14"><path d="M0 7.500h12" stroke="#000" /></svg>
          <svg viewBox="0 0 13 14"><path d="M.5 3.500h9v9h-9zM3 3V1.500h9v9h-2" fill="none" stroke="#000" /></svg>
          <svg viewBox="0 0 13 14"><path d="M.5 1.500l12 12M12.500 1.500l-12 12" stroke="#000" /></svg>
        </WinButtons>
      </TitleBar>
      <MenuBar>{menu.map(([t, w]) => <MenuItem key={t} $w={w}>{t}</MenuItem>)}</MenuBar>
      <ToolBar>
        <Tool $ml={18}><Logo /></Tool><Sep $ml={18} />
        <T g="back" ml={16} /><T g="fwd" ml={19} /><T g="save" ml={19} /><T g="dbAdd" ml={18} /><T g="dbPause" ml={18} /><Caret $ml={10} />
        <T g="refresh" ml={9} off /><Caret $ml={11} $off /><Sep $ml={11} />
        <T g="chartAdd" ml={14} /><Caret $ml={10} /><T g="dup" ml={11} /><T g="chartX" ml={18} /><Caret $ml={10} /><Sep $ml={11} />
        <T g="swap" ml={15} /><T g="sortA" ml={19} off /><T g="sortB" ml={20} off /><Sep $ml={18} />
        <T g="pen" ml={16} /><Caret $ml={7} /><T g="clip" ml={11} off /><Caret $ml={10} $off /><T g="text" ml={13} /><T g="pin" ml={17} />
        <FitBox><Caret $off /></FitBox><Sep $ml={17} />
        <T g="dash" ml={16} /><Caret $ml={7} /><T g="present" ml={13} /><Sep $ml={19} /><T g="share" ml={17} />
        <ShowMe>
          <svg width="14" height="16"><path d="M0 1.500h11" stroke="#7b6d95" strokeWidth="3" /><path d="M0 5.500h14" stroke="#87a3c7" strokeWidth="3" /><path d="M0 9.500h5" stroke="#eba78c" strokeWidth="3" /><path d="M0 13.500h8" stroke="#e8717f" strokeWidth="3" /></svg>
          <Txt $size={16} $ls={0.45}>Show Me</Txt>
        </ShowMe>
      </ToolBar>
      <Body>
        <Side>
          <PaneTabs>
            <PaneTab $on><Txt $size={16} $w={700} $ls={0.2}>Dashboard</Txt></PaneTab>
            <PaneTab><Txt $size={16} $ls={0.5}>Layout</Txt><svg width="7" height="9"><path d="M.5 3.500L3.500 0l3 3.500zM.5 5.500l3 3.500 3-3.500z" fill="#666" /></svg></PaneTab>
          </PaneTabs>
          <DeviceBox>
            <Device $on><Txt $size={16} $ls={0.15}>Default</Txt></Device>
            <Device><Txt $size={16} $ls={0.35}>Phone</Txt></Device>
            <PreviewButton><Txt $size={14} $ls={0.4}>Device Preview</Txt></PreviewButton>
          </DeviceBox>
          <SizeBox>
            <Heading>Size</Heading>
            <SizeSelect><Txt $size={15} $ls={0.1}>Custom size (1300 x 1500)</Txt><Caret /></SizeSelect>
          </SizeBox>
          <SheetsBox>
            <Heading $pad>Sheets</Heading>
            <SheetList>
              {sheets.map(([t, used], i) => (
                <Sheet key={t} $on={i === 0}>
                  <svg viewBox="0 0 16 17"><path d="M.5 2.500h12v12H.5zM4 11.500v-3M6.500 11.500V5.500M9 11.500v-5" fill="none" stroke="#555" />{used && <><circle cx="12.500" cy="13" r="4" fill="#3d7ea6" stroke="#fff" strokeWidth=".6" /><path d="M10.500 13l1.500 1.500 2.500-3" fill="none" stroke="#fff" /></>}</svg>
                  <Txt $size={16.5} $ls={i === 0 ? 0.35 : 0.25}>{t}</Txt>
                </Sheet>
              ))}
            </SheetList>
          </SheetsBox>
          <ObjectsBox>
            <Heading>Objects</Heading>
            <ObjectGrid>{objects.map(([t, g]) => <ObjectItem key={t}><svg viewBox="0 0 16 16">{g}</svg><Txt $size={13} $ls={-0.15}>{t}</Txt></ObjectItem>)}</ObjectGrid>
            <Segment><SegmentItem $on><Txt>Tiled</Txt></SegmentItem><SegmentItem><Txt>Floating</Txt></SegmentItem></Segment>
            <CheckRow $gap={6} $h={50}><Box /><Txt $size={16} $ls={0.3}>Show dashboard title</Txt></CheckRow>
          </ObjectsBox>
        </Side>
        <Canvas>
          <DashTitle>South-east Asia Armed Conflict for <Strong $ls={-0.33}>Myanmar</Strong> in <Strong $ls={0.29}>2015 to 2020</Strong></DashTitle>
          <DashRow>
            <MapFrame><ConflictMap /></MapFrame>
            <Filters>
              <Period>
                <Label $ls={-0.2}>Period Range</Label>
                <Dates><Txt $size={13} $ls={0.2}>1/1/2015</Txt><Txt $size={13} $ls={0.2}>31/10/2020</Txt></Dates>
                <Slider><Track /></Slider>
              </Period>
              <CountryFilter>
                <Label $ls={-0.07}>Southeast Asian Country</Label>
                <Options>
                  {countries.map(c => (
                    <CheckRow key={c} $gap={5} $h={23}><Box $on={c === "Myanmar"}>{c === "Myanmar" && <svg viewBox="0 0 12 12"><path d="M2 6l3 3.500L10 2" /></svg>}</Box><Txt $ls={-0.05}>{c}</Txt></CheckRow>
                  ))}
                </Options>
              </CountryFilter>
              <Grip />
              <Legend>
                <Label $ls={-0.15}>Click on Event Type to highlight</Label>
                {events.map(([t, c]) => <LegendRow key={t} $pl={4}><Swatch $edge $c={c} /><Txt $ls={0.05}>{t}</Txt></LegendRow>)}
                <LegendTools>
                  <svg viewBox="0 0 22 63"><path d="M5.500 5l9 9M14.500 5l-9 9" stroke="#fff" strokeWidth="1.500" /><path d="M6 24h9v2h-2v4l2.500 2.500h-4V38h-1.500v-5.500h-4L8 30v-4H6zM7 50h7l-3.500 4z" fill="#fff" /></svg>
                </LegendTools>
              </Legend>
              <Countries>
                <Label $ls={-0.1}>Country</Label>
                {colours.map(([t, c]) => <LegendRow key={t} $pl={3}><Swatch $c={c} /><Txt $ls={-0.1}>{t}</Txt></LegendRow>)}
              </Countries>
            </Filters>
          </DashRow>
        </Canvas>
        <Gutter />
        <ScrollBar>
          <svg viewBox="0 0 19 21"><path d="M5 13l4.500-5 4.500 5" /></svg>
          <Thumb />
          <svg viewBox="0 0 19 21"><path d="M5 8l4.500 5 4.500-5" /></svg>
        </ScrollBar>
      </Body>
      <SheetTabs>
        <Tab $w={163} $pl={11}><svg width="9" height="12"><ellipse cx="4" cy="2" rx="3.500" ry="1.500" /><path d="M.5 2v7.500c0 1.500 7 1.500 7 0V2" /></svg><Txt $size={14.5} $ls={0.25}>Data Source</Txt></Tab>
        {tabs.map(([t, w]) => <Tab key={t} $w={w}><Txt $size={14.5} $ls={0.25}>{t}</Txt></Tab>)}
        <Tab $on $w={122} $pl={8}><svg width="12" height="12"><path d="M.5.5h11v11H.5zM6 .5v11M.5 6h11" /></svg><Txt $size={14.5} $w={700} $ls={-0.3}>Dashboard 1</Txt></Tab>
        <Tab $w={32} $pl={9}><svg width="15" height="16"><path d="M6 11.500H.5V.5h11V7M3.500 8V6M6 9V3M8.500 8V4" /><path d="M7.500 12h7M11 8.500v7" strokeWidth="2" /></svg></Tab>
        <Tab $w={32} $pl={9}><svg width="15" height="16"><path d="M6 11.500H.5V.5h11V7M6 .5v11M.5 6h11" /><path d="M7.500 12h7M11 8.500v7" strokeWidth="2" /></svg></Tab>
        <Tab $w={32} $pl={9}><svg width="15" height="16"><path d="M6 12L.5 10V.5L6 3l5.500-2.500V7M6 3v9" /><path d="M7.500 12h7M11 8.500v7" strokeWidth="2" /></svg></Tab>
      </SheetTabs>
      <Status>
        <StatusText $w={90} $ls={-0.05}>4140 marks</StatusText><StatusText $w={126} $ls={-0.4}>1 row by 1 column</StatusText><StatusText $w={1282}>SUM of CNT(Sheet1): 7,277</StatusText>
        <StatusCell $w={157} /><StatusCell $w={32} /><StatusCell $w={32} /><StatusCell $w={57} />
        <StatusCell $w={71}><svg viewBox="0 0 68 20" fill="#b5b5b5"><path d="M8 6h1v8H8zM14 6v8l-4-4zM29 6v8l-4-4zM42 6v8l4-4zM56 6v8l4-4zM61 6h1v8h-1z" /></svg></StatusCell>
        <StatusCell $w={69}><svg viewBox="0 0 68 20"><path d="M8 4.500h11M8 9.500h11M8 14.500h11" stroke="#b5b5b5" strokeWidth="3.500" strokeDasharray="3 1" /><path d="M30 4h11v6.500H30zM30 12h3v3h-3zM34 12h3v3h-3zM38 12h3v3h-3z" fill="#b5b5b5" /><path d="M52 4h11v11H52z" fill="#666" /></svg></StatusCell>
      </Status>
    </Window>
  );
}
